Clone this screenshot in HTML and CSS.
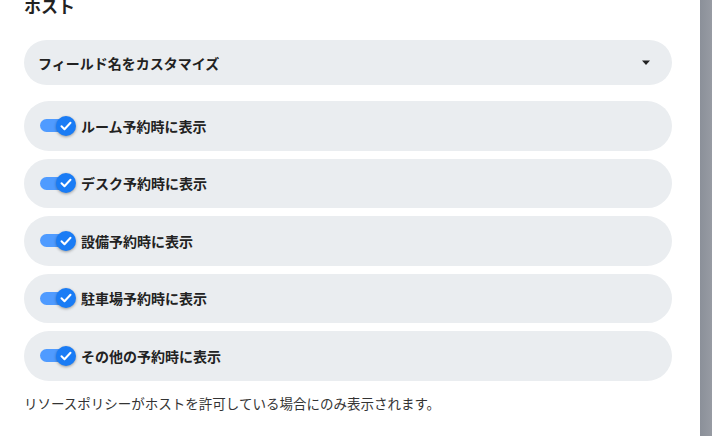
FILE: index.html
```html
<!DOCTYPE html>
<html lang="ja">
<head>
    <meta charset="UTF-8">
    <meta name="viewport" content="width=device-width, initial-scale=1.0">
    <title>ホスト設定</title>
    <link rel="stylesheet" href="styles.css">
</head>
<body>
    <div class="layout">
        <main class="panel">
            <h2 class="section-title">ホスト</h2>

            <button type="button" class="select">
                <span>フィールド名をカスタマイズ</span>
                <svg class="caret" width="10" height="6" viewBox="0 0 10 6"><path d="M1 0.5h8L5 5z" fill="#222"/></svg>
            </button>

            <ul class="toggle-list">
                <li class="toggle-row">
                    <label class="switch"><input type="checkbox" checked><span class="track"></span><span class="thumb"><svg viewBox="0 0 20 20"><path d="M5.5 10.2l3 3 6-6.4" fill="none" stroke="#fff" stroke-width="2" stroke-linecap="round" stroke-linejoin="round"/></svg></span></label>
                    <span class="toggle-label">ルーム予約時に表示</span>
                </li>
                <li class="toggle-row">
                    <label class="switch"><input type="checkbox" checked><span class="track"></span><span class="thumb"><svg viewBox="0 0 20 20"><path d="M5.5 10.2l3 3 6-6.4" fill="none" stroke="#fff" stroke-width="2" stroke-linecap="round" stroke-linejoin="round"/></svg></span></label>
                    <span class="toggle-label">デスク予約時に表示</span>
                </li>
                <li class="toggle-row">
                    <label class="switch"><input type="checkbox" checked><span class="track"></span><span class="thumb"><svg viewBox="0 0 20 20"><path d="M5.5 10.2l3 3 6-6.4" fill="none" stroke="#fff" stroke-width="2" stroke-linecap="round" stroke-linejoin="round"/></svg></span></label>
                    <span class="toggle-label">設備予約時に表示</span>
                </li>
                <li class="toggle-row">
                    <label class="switch"><input type="checkbox" checked><span class="track"></span><span class="thumb"><svg viewBox="0 0 20 20"><path d="M5.5 10.2l3 3 6-6.4" fill="none" stroke="#fff" stroke-width="2" stroke-linecap="round" stroke-linejoin="round"/></svg></span></label>
                    <span class="toggle-label">駐車場予約時に表示</span>
                </li>
                <li class="toggle-row">
                    <label class="switch"><input type="checkbox" checked><span class="track"></span><span class="thumb"><svg viewBox="0 0 20 20"><path d="M5.5 10.2l3 3 6-6.4" fill="none" stroke="#fff" stroke-width="2" stroke-linecap="round" stroke-linejoin="round"/></svg></span></label>
                    <span class="toggle-label">その他の予約時に表示</span>
                </li>
            </ul>

            <p class="note">リソースポリシーがホストを許可している場合にのみ表示されます。</p>
        </main>
        <div class="backdrop"></div>
    </div>
</body>
</html>
```

FILE: styles.css
```css
:root {
    --text-color: #222;
    --row-bg: #eaedf0;
    --switch-on: #1a7cf5;
    --track-on: #4f9bff;
}

* {
    box-sizing: border-box;
    margin: 0;
    padding: 0;
    font-family: "Noto Sans CJK JP", "Noto Sans", sans-serif;
}

body {
    background: #fff;
    color: var(--text-color);
    overflow: hidden;
}

.layout {
    display: flex;
    height: 436px;
}

.panel {
    width: 700px;
    padding: 0 28px 0 24px;
}

.section-title {
    font-size: 17px;
    font-weight: 700;
    line-height: 24px;
    margin-top: -6px;
    margin-bottom: 22px;
}

.select {
    display: flex;
    align-items: center;
    justify-content: space-between;
    width: 100%;
    height: 45px;
    padding: 0 21px 0 14px;
    border: none;
    border-radius: 23px;
    background: var(--row-bg);
    color: var(--text-color);
    font-size: 14px;
    font-weight: 700;
    cursor: pointer;
}

.toggle-list {
    list-style: none;
    margin-top: 16px;
    display: flex;
    flex-direction: column;
    gap: 8px;
}

.toggle-row {
    display: flex;
    align-items: center;
    gap: 5px;
    height: 49.5px;
    padding-left: 16px;
    border-radius: 25px;
    background: var(--row-bg);
}

.toggle-label {
    font-size: 14px;
    font-weight: 700;
}

.switch {
    position: relative;
    display: flex;
    align-items: center;
    width: 36px;
    height: 20px;
    cursor: pointer;
}

.switch input {
    display: none;
}

.track {
    width: 30px;
    height: 13px;
    border-radius: 7px;
    background: var(--track-on);
}

/* knob sits over the right end of the track */
.thumb {
    position: absolute;
    left: 16px;
    top: 0;
    width: 20px;
    height: 20px;
    border-radius: 50%;
    background: var(--switch-on);
    box-shadow: 0 1px 3px rgba(0, 0, 0, 0.35);
}

.thumb svg {
    display: block;
    width: 20px;
    height: 20px;
}

.note {
    margin-top: 12px;
    font-size: 13.5px;
    line-height: 20px;
    color: #333;
}

.backdrop {
    flex: 1;
    background: linear-gradient(to right, #8b9099, #979ba3);
}
```
